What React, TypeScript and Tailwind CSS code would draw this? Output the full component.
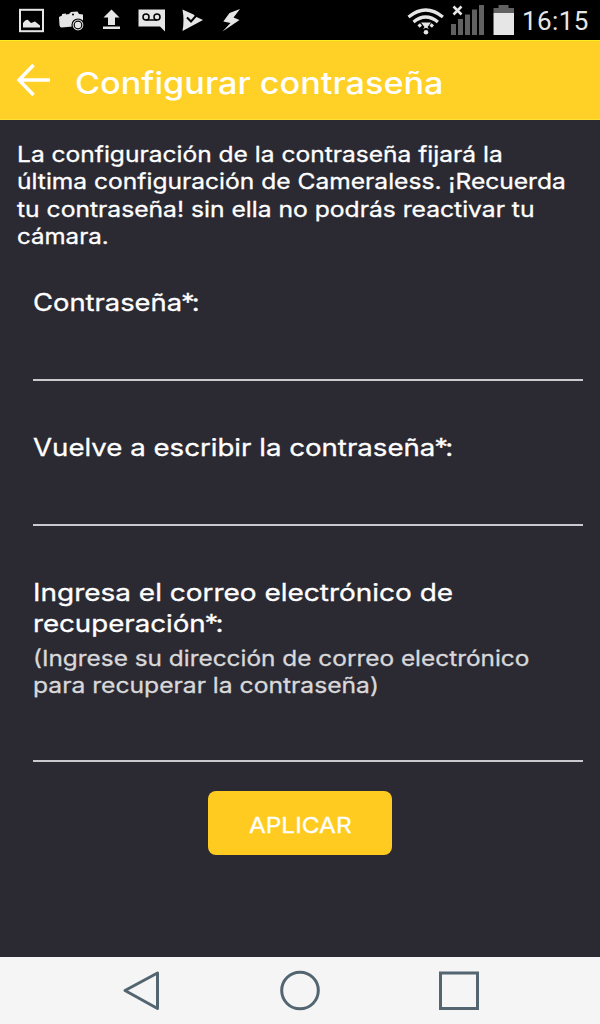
import type { ReactNode } from "react";

function StatusBar() {
  return (
    <header className="flex h-10 items-center justify-between bg-black">
      <svg width="250" height="40" fill="#e6e6e6">
        {/* Gallery */}
        <rect x="20" y="9.8" width="23" height="21.4" fill="none" stroke="#e6e6e6" strokeWidth="2" />
        <path d="M23 27.500v-4.500q3-4 5-3l3 3 4-1.500 5 4v2z" />
        {/* Camera */}
        <path d="M59 17l3-1.500v-1.500l4-.5v1l3-.5 2-2 6.500-.5 1.500 2.500 4 .5v10l-10 2-11.500 1q-1.500 0-2-2z" />
        <circle cx="78" cy="25" r="6" stroke="#000" strokeWidth="1.200" />
        <circle cx="78" cy="25" r="3.800" fill="none" stroke="#000" strokeWidth="1.200" />
        <circle cx="73" cy="14.500" r="1" fill="#000" />
        {/* Upload */}
        <path d="M111.500 9.500l8 8h-4.500v7.500h-7v-7.500h-4.500zM103 26.500h17v2.500h-17z" />
        {/* Voicemail */}
        <path d="M138.500 9.500h26.500v22l-5-5h-21.500z" />
        <g fill="none" stroke="#000" strokeWidth="1.500">
          <circle cx="146" cy="17" r="3" />
          <circle cx="157" cy="17" r="3" />
          <path d="M146 20h11" />
        </g>
        {/* Play with check */}
        <path d="M182.500 9.500l11 5 2 2 7.500 3.500-20.500 11q2-10.500 0-21.500z" />
        <path d="M187 17.500l4 4 8-9" fill="none" stroke="#000" strokeWidth="2" />
        {/* Bolt */}
        <path d="M240 9L229.500 13 223.300 21.500 230.500 23 222.500 31.500 239.500 20 233.500 17.500z" />
      </svg>
      <div className="flex h-10 items-center">
        <svg width="120" height="40" fill="#e6e6e6">
          <g fill="none" stroke="#e6e6e6" strokeWidth="3.200">
            <path d="M8.500 17q17.200-14 34.400 0" />
            <path d="M13.500 22q12.200-10 24.400 0" />
            <path d="M18.500 26.500l2.500-2M33 26.500l-2.500-2" />
          </g>
          <path d="M21 22.500h10l-3.500 4.500 1.500 2-3-1.200-3 1.200 1.500-2z" />
          <circle cx="26" cy="32.300" r="2.300" />
          <g fill="#616161">
            <path d="M51 24h5v11h-5zM58 19h5v16h-5zM65 14.500h5v20.500h-5zM72 9.500h5v25.500h-5zM79 5h5v30h-5z" />
            <path d="M98.500 5h10v3h-10zM93.500 8h20.500v5h-20.500z" />
          </g>
          <path d="M93.500 13h20.500v22h-20.500z" />
          <path d="M53.500 6.500l8 8M61.500 6.500l-8 8" stroke="#e6e6e6" strokeWidth="2.500" />
        </svg>
        <span className="w-20 pt-0.5 pl-0.5 font-['Roboto',sans-serif] text-[26px] leading-9 font-normal tracking-[0.4px] text-[#e6e6e6]">
          16:15
        </span>
      </div>
    </header>
  );
}

function Field({ className, children }: { className: string; children: ReactNode }) {
  return (
    <label className={`block border-b-2 border-[#cbc8ce] ${className}`}>
      {children}
    </label>
  );
}

// One line of text, widened from its left edge
function Line({ className, children }: { className: string; children: ReactNode }) {
  return (
    <span className={`block w-max origin-left whitespace-nowrap ${className}`}>
      {children}
    </span>
  );
}

function Required() {
  return <span className="-ml-px tracking-[-2.5px]">*:</span>;
}

export default function App() {
  return (
    <div className="flex h-[1024px] w-[600px] flex-col overflow-hidden bg-[#2b2a33] font-['Inter',sans-serif] font-normal text-white">
      <StatusBar />

      <div className="flex h-20 items-center border-y border-t-[#ffed20] border-b-[#ffe034] bg-[#ffd026]">
        <svg className="ml-4" width="36" height="36" fill="none" stroke="#fff" strokeWidth="3.500">
          <path d="M34 18H3M17.500 3L3 18l14.500 15" />
        </svg>
        <h1 className="ml-[23px] pt-1.5 text-[30px] leading-10 font-medium">
          <Line className="scale-x-[1.141]">Configurar contraseña</Line>
        </h1>
      </div>

      <main className="flex-1 pt-[21px] pr-[17px] pl-[33px] [-webkit-text-stroke:0.3px]">
        <p className="-ml-4 text-[21.500px] leading-[27.300px]">
          <Line className="scale-x-[1.142]">La configuración de la contraseña fijará la</Line>
          <Line className="scale-x-[1.143]">última configuración de Cameraless. ¡Recuerda</Line>
          <Line className="scale-x-[1.146]">tu contraseña! sin ella no podrás reactivar tu</Line>
          <Line className="scale-x-[1.12]">cámara.</Line>
        </p>

        <Field className="mt-[36.800px] h-[94px] text-2xl leading-[31px]">
          <Line className="scale-x-[1.14]">Contraseña<Required /></Line>
        </Field>
        <Field className="mt-[51px] h-[94px] text-2xl leading-[31px]">
          <Line className="scale-x-[1.151]">Vuelve a escribir la contraseña<Required /></Line>
        </Field>
        <Field className="mt-[51px] h-[185px] text-2xl leading-[31px]">
          <Line className="scale-x-[1.165]">Ingresa el correo electrónico de</Line>
          <Line className="scale-x-[1.152]">recuperación<Required /></Line>
          <span className="mt-1.5 block text-[21.500px] leading-[27.500px] text-[#d8d8da]">
            <Line className="scale-x-[1.134]">(Ingrese su dirección de correo electrónico</Line>
            <Line className="scale-x-[1.146]">para recuperar la contraseña)</Line>
          </span>
        </Field>

        <button className="mt-[29px] ml-[175px] flex h-16 w-[184px] items-center justify-center rounded-lg bg-[#ffcb20] pt-1.5 text-[22px] font-normal">
          <span className="scale-x-[1.11]">APLICAR</span>
        </button>
      </main>

      <nav className="h-[67px] bg-[#f5f5f5]">
        <svg width="600" height="67" fill="none" stroke="#536570" strokeWidth="3">
          <path d="M125 33.500l32.500-17.500v35.500z" strokeLinejoin="round" />
          <circle cx="300" cy="33.500" r="18.300" />
          <rect x="440.500" y="16" width="37" height="35.500" />
        </svg>
      </nav>
    </div>
  );
}
